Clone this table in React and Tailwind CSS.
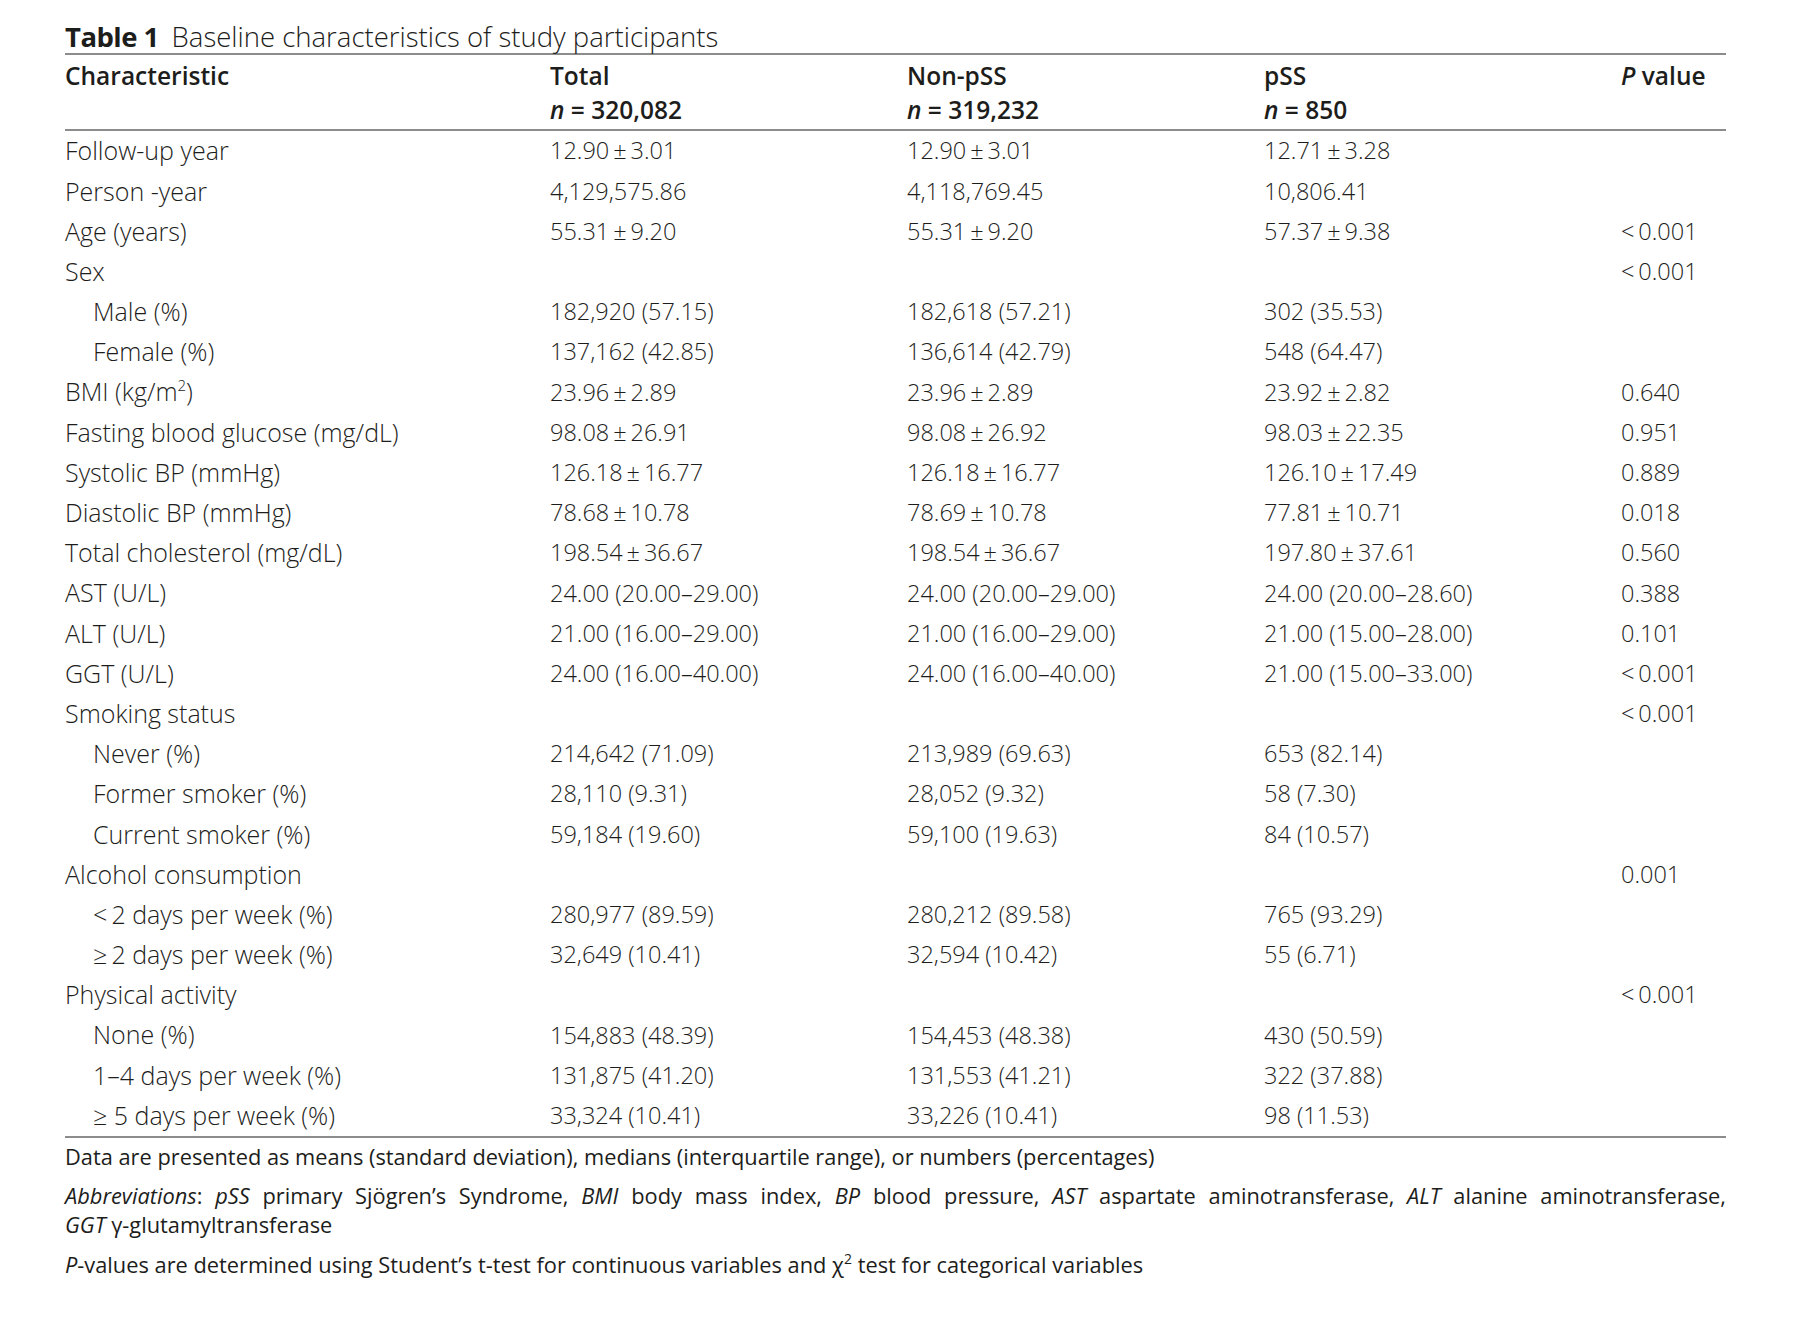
const rows = [
    ['Follow-up year', '12.90\u2009±\u20093.01', '12.90\u2009±\u20093.01', '12.71\u2009±\u20093.28', ''],
    ['Person -year', '4,129,575.86', '4,118,769.45', '10,806.41', ''],
    ['Age (years)', '55.31\u2009±\u20099.20', '55.31\u2009±\u20099.20', '57.37\u2009±\u20099.38', '<\u20090.001'],
    ['Sex', '', '', '', '<\u20090.001'],
    ['Male (%)', '182,920 (57.15)', '182,618 (57.21)', '302 (35.53)', '', true],
    ['Female (%)', '137,162 (42.85)', '136,614 (42.79)', '548 (64.47)', '', true],
    ['BMI', '23.96\u2009±\u20092.89', '23.96\u2009±\u20092.89', '23.92\u2009±\u20092.82', '0.640'],
    ['Fasting blood glucose (mg/dL)', '98.08\u2009±\u200926.91', '98.08\u2009±\u200926.92', '98.03\u2009±\u200922.35', '0.951'],
    ['Systolic BP (mmHg)', '126.18\u2009±\u200916.77', '126.18\u2009±\u200916.77', '126.10\u2009±\u200917.49', '0.889'],
    ['Diastolic BP (mmHg)', '78.68\u2009±\u200910.78', '78.69\u2009±\u200910.78', '77.81\u2009±\u200910.71', '0.018'],
    ['Total cholesterol (mg/dL)', '198.54\u2009±\u200936.67', '198.54\u2009±\u200936.67', '197.80\u2009±\u200937.61', '0.560'],
    ['AST (U/L)', '24.00 (20.00–29.00)', '24.00 (20.00–29.00)', '24.00 (20.00–28.60)', '0.388'],
    ['ALT (U/L)', '21.00 (16.00–29.00)', '21.00 (16.00–29.00)', '21.00 (15.00–28.00)', '0.101'],
    ['GGT (U/L)', '24.00 (16.00–40.00)', '24.00 (16.00–40.00)', '21.00 (15.00–33.00)', '<\u20090.001'],
    ['Smoking status', '', '', '', '<\u20090.001'],
    ['Never (%)', '214,642 (71.09)', '213,989 (69.63)', '653 (82.14)', '', true],
    ['Former smoker (%)', '28,110 (9.31)', '28,052 (9.32)', '58 (7.30)', '', true],
    ['Current smoker (%)', '59,184 (19.60)', '59,100 (19.63)', '84 (10.57)', '', true],
    ['Alcohol consumption', '', '', '', '0.001'],
    ['<\u20092 days per week (%)', '280,977 (89.59)', '280,212 (89.58)', '765 (93.29)', '', true],
    ['≥\u20092 days per week (%)', '32,649 (10.41)', '32,594 (10.42)', '55 (6.71)', '', true],
    ['Physical activity', '', '', '', '<\u20090.001'],
    ['None (%)', '154,883 (48.39)', '154,453 (48.38)', '430 (50.59)', '', true],
    ['1–4 days per week (%)', '131,875 (41.20)', '131,553 (41.21)', '322 (37.88)', '', true],
    ['≥ 5 days per week (%)', '33,324 (10.41)', '33,226 (10.41)', '98 (11.53)', '', true],
];

const cols = 'grid grid-cols-[485px_357px_357px_357px_105px]';

function Label({ text, indent }) {
    // BMI needs the superscript unit
    if (text === 'BMI') {
        return <span className="text-[25px]">BMI (kg/m<sup className="text-[15px] -top-[10px]">2</sup>)</span>;
    }
    return <span className={`text-[25px] ${indent ? 'pl-[28px]' : ''}`}>{text}</span>;
}

export default function App() {
    return (
        <div className="w-[1800px] h-[1317px] bg-white text-[#1d1d1b] font-['Open_Sans',sans-serif]">
            <div className="ml-[65px] w-[1661px] pt-[20px]">
                {/* Caption */}
                <div className="h-[35px] flex items-center text-[27.5px] border-b-2 border-[#8c8c8c]">
                    <span className="font-bold tracking-[-0.02em]">Table 1</span>
                    <span className="ml-[13px] font-light">Baseline characteristics of study participants</span>
                </div>

                {/* Header */}
                <div className={`${cols} pt-[4px] pb-[2px] text-[24.5px] leading-[34px] font-semibold border-b-2 border-[#8c8c8c]`}>
                    <div>Characteristic</div>
                    <div>Total<br /><i>n</i>{' = '}320,082</div>
                    <div>Non-pSS<br /><i>n</i>{' = '}319,232</div>
                    <div>pSS<br /><i>n</i>{' = '}850</div>
                    <div><i>P</i> value</div>
                </div>

                {/* Body */}
                <div className="border-b-2 border-[#8c8c8c] text-[23.5px] font-light">
                    {rows.map((r, i) => (
                        <div key={i} className={`${cols} h-[40.2px] items-center whitespace-nowrap`}>
                            <Label text={r[0]} indent={r[5]} />
                            <span>{r[1]}</span>
                            <span>{r[2]}</span>
                            <span>{r[3]}</span>
                            <span>{r[4]}</span>
                        </div>
                    ))}
                </div>

                {/* Notes */}
                <div className="text-[21.8px] leading-[29px]">
                    <p className="mt-[4px]">Data are presented as means (standard deviation), medians (interquartile range), or numbers (percentages)</p>
                    <p className="mt-[10px] text-justify">
                        <i>Abbreviations</i>: <i>pSS</i> primary Sjögren’s Syndrome, <i>BMI</i> body mass index, <i>BP</i> blood pressure, <i>AST</i> aspartate aminotransferase, <i>ALT</i> alanine aminotransferase, <span className="whitespace-nowrap"><i>GGT</i> γ-glutamyltransferase</span>
                    </p>
                    <p className="mt-[11px]">
                        <i>P</i>-values are determined using Student’s t-test for continuous variables and χ<sup className="text-[14px] -top-[9px]">2</sup> test for categorical variables
                    </p>
                </div>
            </div>
        </div>
    );
}
